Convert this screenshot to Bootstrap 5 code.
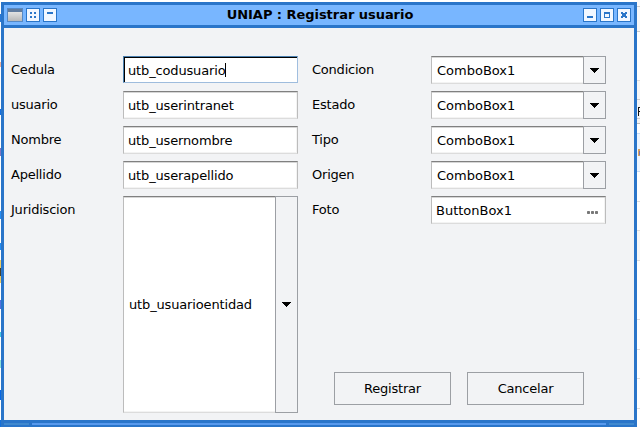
<!DOCTYPE html>
<html lang="es">
<head>
<meta charset="utf-8">
<meta name="viewport" content="width=device-width, initial-scale=1">
<title>UNIAP : Registrar usuario</title>
<link href="https://cdn.jsdelivr.net/npm/bootstrap@5.3.0/dist/css/bootstrap.min.css" rel="stylesheet">
<script defer src="https://cdn.jsdelivr.net/npm/bootstrap@5.3.0/dist/js/bootstrap.bundle.min.js"></script>
<style>
body{width:640px;height:427px;font:13px/16px "DejaVu Sans",sans-serif;color:#000;background:#fff}
.edge-l{width:1px;background:linear-gradient(#fff 14px,#2878d8 14px 22px,#fff 22px 62px,#f0b09a 62px 67px,#fff 67px 109px,#1670df 109px 115px,#fff 115px 148px,#8074c0 148px 156px,#fff 156px 211px,#238cf4 211px 219px,#fff 219px 243px,#238cf4 243px 250px,#fff 250px 260px,#f0cc62 260px 268px,#44402c 268px 276px,#f0cc62 276px 283px,#fff 283px 300px,#526fdf 300px 309px,#fff 309px 332px,#45c8e4 332px 337px,#fff 337px 360px,#8de2d8 360px 368px,#fff 368px 390px,#0867e5 390px 400px,#fff 400px 420px,#1570d8 420px)}
.edge-r{width:3px;background:linear-gradient(#fafafa 6px,#ccc 6px 7px,#f8f8f8 7px 31px,#ccc 31px 32px,#fff 32px 80px,#ddd 80px 81px,#f7f7f7 81px 99px,#ccc 99px 100px,#f2f4f7 100px 118px,#ccc 118px 119px,#f4f4f4 119px 123px,#bbb 123px 124px,#fff 124px 133px,#c5dcf8 133px 134px,#edf5ff 134px 171px,#c5dcf8 171px 172px,#fff 172px 201px,#ddd 201px 202px,#fff 202px 230px,#ddd 230px 231px,#f7f7f7 231px 260px,#ddd 260px 261px,#fff 261px 319px,#ddd 319px 320px,#fff 320px 349px,#ddd 349px 350px,#fff 350px 378px,#ddd 378px 379px,#fff 379px 408px,#ddd 408px 409px,#fff 409px)}
.edge-r svg{margin-top:107px}
.win{width:636px;height:425px;margin-top:2px;background:#2a75c9}
.bar{height:20px;margin:3px 3px 0;padding:0 3px;background:#78b6ff}
.bar .cap{font-weight:700;letter-spacing:-.04px}
.bar svg,.edge-r svg{display:block}
.pane{height:392px;margin:3px 3px 0;padding:28px 28px 0 7px;background:#f2f3f5}
.col-l{width:287px}
.col-r{width:294px;margin-left:14px}
.stack{gap:7px}
.lbl{width:112px;padding-top:6px;letter-spacing:-.22px}
.col-r .lbl{width:119px}
.fld{width:175px;height:28px;background:#fff;border:1px solid;border-color:#808080 #bcbcbc #dcdcdc #bcbcbc;box-shadow:inset 0 1px #d6d6d6,inset -1px -1px #f3f3f3;padding-left:4px}
.fld>span{padding-top:2px}
.col-l .fld{letter-spacing:-.15px}
.fld.on{border-color:#4b80af #a0bedf #9ebcdd #4b80af;box-shadow:inset 1px 1px #000;height:27px;margin-bottom:1px}
.caret{width:1px;height:14px;background:#000}
.cmb{border-right:0;padding-left:5px}
.cmb.tall>span{padding-top:0}
.drop{width:23px;margin:-1px 0;background:#f2f3f5;border:1px solid #9c9fa4}
.tall{height:217px}
.more{margin:5px 7px 0 0}
.acts{gap:16px;padding:141px 0 0 22px}
.push{width:117px;height:33px;background:#f2f3f5;border:1px solid #9c9fa4;border-radius:0;font-size:13px;line-height:16px;letter-spacing:-.22px;color:#000;padding:0}
.foot{height:2px;margin:3px 3px 0;gap:3px}
.grip{width:25px;background:#4089cf}
.rail{background:#5799ed}
</style>
</head>
<body class="d-flex overflow-hidden">
<div class="edge-l"></div>
<main class="win flex-shrink-0">
  <header class="bar d-flex align-items-center justify-content-between">
    <svg width="50" height="14" shape-rendering="crispEdges">
      <defs><linearGradient id="g" x2="0" y2="1"><stop stop-color="#e2e2e2"/><stop offset="1" stop-color="#b8b8b8"/></linearGradient></defs>
      <path fill="#5689c5" d="M0 0h16v14H0z"/><path fill="#607b9e" d="M1 1h14v3H1z"/><path fill="url(#g)" d="M1 4h14v9H1z"/>
      <path fill="#2a75c9" d="M19 0h14v14H19zM36 0h14v14H36z"/><path fill="#f2f7ff" d="M20 1h12v12H20zM37 1h12v12H37z"/>
      <path fill="#2a75c9" d="M23 4h2v2h-2zM27 4h2v2h-2zM23 8h2v2h-2zM27 8h2v2h-2zM40 4h6v2h-6z"/>
    </svg>
    <span class="cap">UNIAP : Registrar usuario</span>
    <svg width="48" height="14" shape-rendering="crispEdges">
      <path fill="#2a75c9" d="M0 0h14v14H0zM17 0h14v14H17zM34 0h14v14H34z"/><path fill="#f2f7ff" d="M1 1h12v12H1zM18 1h12v12H18zM35 1h12v12H35z"/>
      <path fill="#2a75c9" fill-rule="evenodd" d="M4 8h6v2H4zM21 4h6v6h-6zM22 6v3h4V6zM38 4h2v1h2V4h2v2h-1v2h1v2h-2V9h-2v1h-2V8h1V6h-1z"/>
    </svg>
  </header>
  <section class="pane d-flex align-items-start">
    <div class="col-l d-flex flex-column stack">
      <div class="d-flex"><label class="lbl">Cedula</label><div class="fld on d-flex align-items-center"><span>utb_codusuario</span><i class="caret"></i></div></div>
      <div class="d-flex"><label class="lbl">usuario</label><div class="fld d-flex align-items-center"><span>utb_userintranet</span></div></div>
      <div class="d-flex"><label class="lbl">Nombre</label><div class="fld d-flex align-items-center"><span>utb_usernombre</span></div></div>
      <div class="d-flex"><label class="lbl">Apellido</label><div class="fld d-flex align-items-center"><span>utb_userapellido</span></div></div>
      <div class="d-flex"><label class="lbl">Juridiscion</label><div class="fld cmb tall d-flex justify-content-between"><span class="align-self-center">utb_usuarioentidad</span><div class="drop d-flex align-items-center justify-content-center"><svg width="9" height="5" shape-rendering="crispEdges"><path d="M0 0h9v1H8v1H7v1H6v1H5v1H4V4H3V3H2V2H1V1H0z"/></svg></div></div></div>
    </div>
    <div class="col-r d-flex flex-column stack">
      <div class="d-flex"><label class="lbl">Condicion</label><div class="fld cmb d-flex justify-content-between"><span class="align-self-center">ComboBox1</span><div class="drop d-flex align-items-center justify-content-center"><svg width="9" height="5" shape-rendering="crispEdges"><path d="M0 0h9v1H8v1H7v1H6v1H5v1H4V4H3V3H2V2H1V1H0z"/></svg></div></div></div>
      <div class="d-flex"><label class="lbl">Estado</label><div class="fld cmb d-flex justify-content-between"><span class="align-self-center">ComboBox1</span><div class="drop d-flex align-items-center justify-content-center"><svg width="9" height="5" shape-rendering="crispEdges"><path d="M0 0h9v1H8v1H7v1H6v1H5v1H4V4H3V3H2V2H1V1H0z"/></svg></div></div></div>
      <div class="d-flex"><label class="lbl">Tipo</label><div class="fld cmb d-flex justify-content-between"><span class="align-self-center">ComboBox1</span><div class="drop d-flex align-items-center justify-content-center"><svg width="9" height="5" shape-rendering="crispEdges"><path d="M0 0h9v1H8v1H7v1H6v1H5v1H4V4H3V3H2V2H1V1H0z"/></svg></div></div></div>
      <div class="d-flex"><label class="lbl">Origen</label><div class="fld cmb d-flex justify-content-between"><span class="align-self-center">ComboBox1</span><div class="drop d-flex align-items-center justify-content-center"><svg width="9" height="5" shape-rendering="crispEdges"><path d="M0 0h9v1H8v1H7v1H6v1H5v1H4V4H3V3H2V2H1V1H0z"/></svg></div></div></div>
      <div class="d-flex"><label class="lbl">Foto</label><div class="fld d-flex align-items-center justify-content-between"><span>ButtonBox1</span><svg class="more" width="11" height="3" fill="#777"><rect width="3" height="3" rx=".7"/><rect x="4" width="3" height="3" rx=".7"/><rect x="8" width="3" height="3" rx=".7"/></svg></div></div>
      <div class="d-flex acts"><button class="btn push">Registrar</button><button class="btn push">Cancelar</button></div>
    </div>
  </section>
  <footer class="foot d-flex"><div class="grip"></div><div class="rail flex-grow-1"></div><div class="grip"></div></footer>
</main>
<div class="edge-r"><svg width="3" height="50" shape-rendering="crispEdges"><path fill="#111" d="M1 0h2v1H2v3h1v1H2v4H1z"/><path fill="#d9a25d" d="M1 42h2v7H1z"/><path fill="#7777b8" d="M2 44h1v4H2z"/></svg></div>
</body>
</html>
